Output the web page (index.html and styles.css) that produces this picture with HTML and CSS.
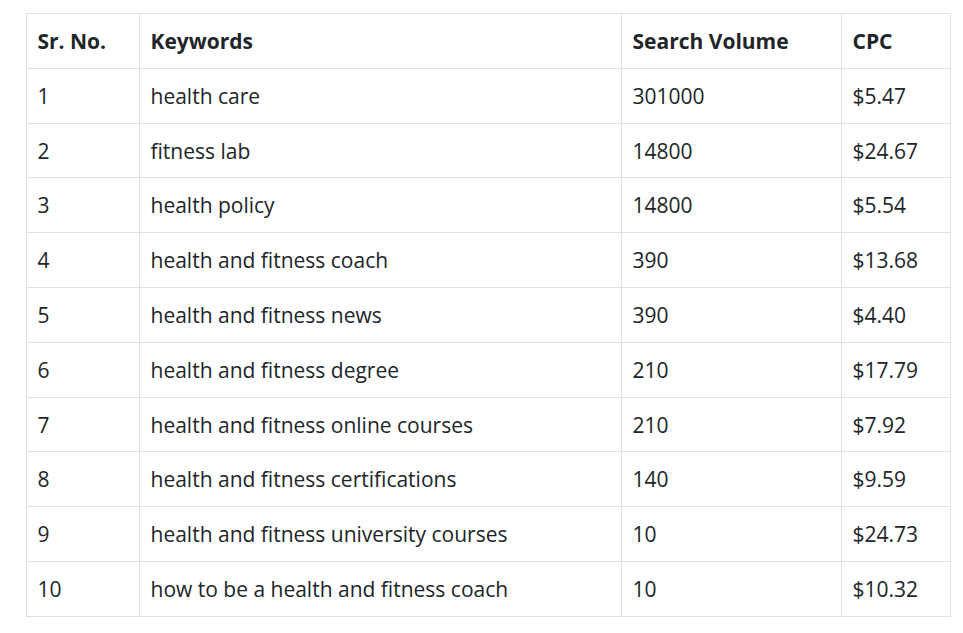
FILE: index.html
```html
<!DOCTYPE html>
<html>
<head>
<meta charset="utf-8">
<link rel="stylesheet" href="styles.css">
</head>
<body>
<div class="wrap">
<table class="kw">
<colgroup><col class="c1"><col class="c2"><col class="c3"><col class="c4"></colgroup>
<thead>
<tr><th>Sr. No.</th><th>Keywords</th><th>Search Volume</th><th>CPC</th></tr>
</thead>
<tbody>
<tr><td>1</td><td>health care</td><td>301000</td><td>$5.47</td></tr>
<tr><td>2</td><td>fitness lab</td><td>14800</td><td>$24.67</td></tr>
<tr><td>3</td><td>health policy</td><td>14800</td><td>$5.54</td></tr>
<tr><td>4</td><td>health and fitness coach</td><td>390</td><td>$13.68</td></tr>
<tr><td>5</td><td>health and fitness news</td><td>390</td><td>$4.40</td></tr>
<tr><td>6</td><td>health and fitness degree</td><td>210</td><td>$17.79</td></tr>
<tr><td>7</td><td>health and fitness online courses</td><td>210</td><td>$7.92</td></tr>
<tr><td>8</td><td>health and fitness certifications</td><td>140</td><td>$9.59</td></tr>
<tr><td>9</td><td>health and fitness university courses</td><td>10</td><td>$24.73</td></tr>
<tr><td>10</td><td>how to be a health and fitness coach</td><td>10</td><td>$10.32</td></tr>
</tbody>
</table>
</div>
</body>
</html>
```
FILE: styles.css
```css
html, body { margin: 0; padding: 0; background: #fff; }
.wrap { padding: 13px 0 0 26px; }
.kw {
  border-collapse: collapse;
  table-layout: fixed;
  width: 924px;
  font-family: "Open Sans", "Noto Sans", sans-serif;
  font-size: 21px;
  color: #212529;
}
.c1 { width: 113px; }
.c2 { width: 482px; }
.c3 { width: 220px; }
.c4 { width: 109px; }
.kw th, .kw td {
  border: 1px solid #dee2e6;
  padding: 13px 10.5px 11px;
  height: 29.8px;
  line-height: 29.8px;
  text-align: left;
  vertical-align: middle;
  white-space: nowrap;
}
.kw th { font-weight: 700; }
```
